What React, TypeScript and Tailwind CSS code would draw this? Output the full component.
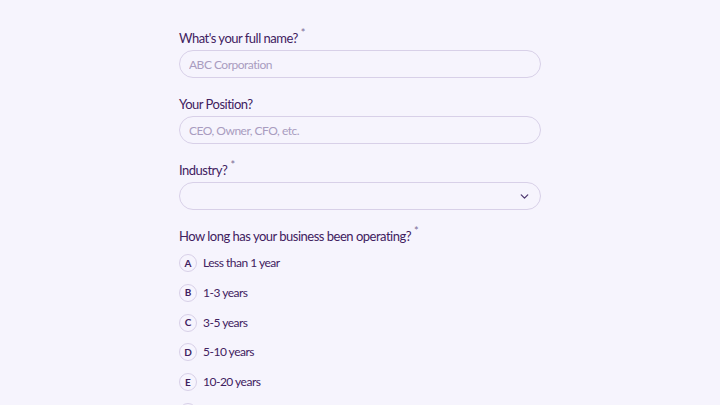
import React from 'react';

const options = [
  { key: 'A', label: 'Less than 1 year' },
  { key: 'B', label: '1-3 years' },
  { key: 'C', label: '3-5 years' },
  { key: 'D', label: '5-10 years' },
  { key: 'E', label: '10-20 years' },
  { key: 'F', label: 'More than 20 years' },
];

function Label({ text, required }: { text: string; required?: boolean }) {
  return (
    <label className="block h-[20px] text-[13px] leading-[20px] tracking-[-0.5px] text-[#41215f] mb-[2px]">
      {text}
      {required && (
        <sup className="ml-[3px] text-[11px] text-[#7d6d98] top-[-6px]">*</sup>
      )}
    </label>
  );
}

export default function App() {
  return (
    <div
      className="min-h-screen bg-[#f6f4fd]"
      style={{ fontFamily: 'Lato, "Noto Sans", sans-serif' }}
    >
      <div className="w-[362px] mx-auto pt-[28px]">
        {/* Full name */}
        <Label text="What's your full name?" required />
        <input
          type="text"
          placeholder="ABC Corporation"
          className="w-full h-[28px] rounded-full border border-[#d8d0e8] bg-transparent px-[9px] text-[12px] tracking-[-0.5px] text-[#41215f] placeholder:text-[#a99cc0] outline-none"
        />

        {/* Position */}
        <div className="mt-4">
          <Label text="Your Position?" />
          <input
            type="text"
            placeholder="CEO, Owner, CFO, etc."
            className="w-full h-[28px] rounded-full border border-[#d8d0e8] bg-transparent px-[9px] text-[12px] tracking-[-0.5px] text-[#41215f] placeholder:text-[#a99cc0] outline-none"
          />
        </div>

        {/* Industry */}
        <div className="mt-4">
          <Label text="Industry?" required />
          <div className="flex items-center justify-end w-full h-[28px] rounded-full border border-[#d8d0e8] pr-[9px]">
            <svg width="13" height="13" viewBox="0 0 24 24" fill="none" stroke="#4f3870" strokeWidth="2.4" strokeLinecap="round" strokeLinejoin="round">
              <path d="M6 9l6 6 6-6" />
            </svg>
          </div>
        </div>

        {/* Operating */}
        <div className="mt-4">
          <Label text="How long has your business been operating?" required />
          <div className="flex flex-col gap-[11.75px] mt-[8px]">
            {options.map((o) => (
              <div key={o.key} className="flex items-center gap-[6px] h-[18px]">
                <span className="flex items-center justify-center w-[18px] h-[18px] rounded-full border border-[#d8d0e8] text-[10px] font-bold text-[#41215f]">
                  {o.key}
                </span>
                <span className="text-[12px] tracking-[-0.5px] text-[#41215f]">{o.label}</span>
              </div>
            ))}
          </div>
        </div>
      </div>
    </div>
  );
}
